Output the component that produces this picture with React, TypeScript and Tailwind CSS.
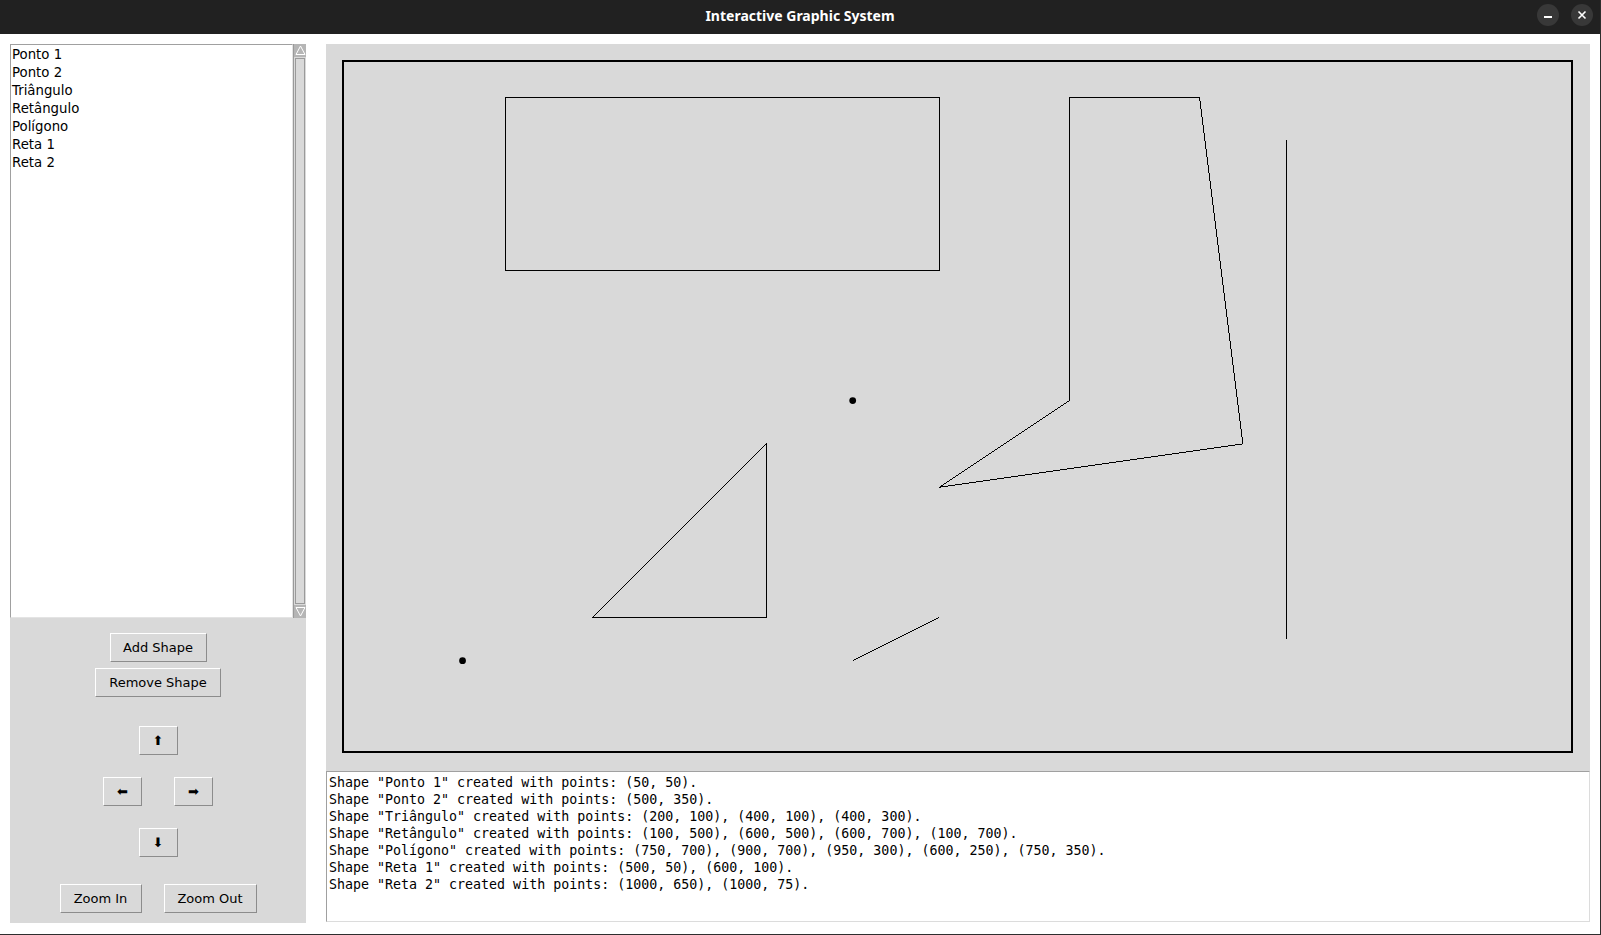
import React from 'react';

const shapeNames = ['Ponto 1', 'Ponto 2', 'Triângulo', 'Retângulo', 'Polígono', 'Reta 1', 'Reta 2'];

const logLines = [
  'Shape "Ponto 1" created with points: (50, 50).',
  'Shape "Ponto 2" created with points: (500, 350).',
  'Shape "Triângulo" created with points: (200, 100), (400, 100), (400, 300).',
  'Shape "Retângulo" created with points: (100, 500), (600, 500), (600, 700), (100, 700).',
  'Shape "Polígono" created with points: (750, 700), (900, 700), (950, 300), (600, 250), (750, 350).',
  'Shape "Reta 1" created with points: (500, 50), (600, 100).',
  'Shape "Reta 2" created with points: (1000, 650), (1000, 75).',
];

// world coords -> canvas pixels (y flipped)
const S = 0.867;

interface TkButtonProps {
  children: React.ReactNode;
  className?: string;
}

const TkButton: React.FC<TkButtonProps> = ({ children, className }) => (
  <button
    className={`flex items-center justify-center h-[29px] bg-[#d9d9d9] border border-t-white border-l-white border-r-[#8c8c8c] border-b-[#8c8c8c] text-[13px] text-black font-['DejaVu_Sans',sans-serif] ${className ?? ''}`}
  >
    {children}
  </button>
);

const ScrollArrow: React.FC<{ down?: boolean }> = ({ down }) => (
  <div className="h-[13px] w-full bg-[#b5b5b5] flex items-center justify-center">
    <svg width="11" height="11" viewBox="0 0 11 11">
      {down ? (
        <path d="M1 1.5 L10 1.5 L5.5 10 Z" fill="none" stroke="#ffffff" strokeWidth="1" />
      ) : (
        <path d="M1 9.5 L10 9.5 L5.5 1 Z" fill="none" stroke="#ffffff" strokeWidth="1" />
      )}
    </svg>
  </div>
);

const DrawingCanvas: React.FC = () => (
  <svg width="1227" height="689" className="block">
    <g transform={`translate(75.2 642) scale(${S} ${-S})`} fill="none" stroke="#000">
      {/* Ponto 1, Ponto 2 */}
      <circle cx="50" cy="50" r="3.9" fill="#000" stroke="none" />
      <circle cx="500" cy="350" r="3.9" fill="#000" stroke="none" />
      <g shapeRendering="crispEdges">
        {/* Triângulo */}
        <polygon points="200,100 400,100 400,300" vectorEffect="non-scaling-stroke" strokeWidth="1" />
        {/* Retângulo */}
        <polygon points="100,500 600,500 600,700 100,700" vectorEffect="non-scaling-stroke" strokeWidth="1" />
        {/* Polígono */}
        <polygon
          points="750,700 900,700 950,300 600,250 750,350"
          vectorEffect="non-scaling-stroke"
          strokeWidth="1"
        />
        {/* Retas */}
        <line x1="500" y1="50" x2="600" y2="100" vectorEffect="non-scaling-stroke" strokeWidth="1" />
        <line x1="1000" y1="650" x2="1000" y2="75" vectorEffect="non-scaling-stroke" strokeWidth="1" />
      </g>
    </g>
  </svg>
);

export default function App() {
  return (
    <div className="w-[1601px] h-[935px] bg-white border-r border-b border-[#2e2e2e] flex flex-col overflow-hidden">
      {/* title bar */}
      <div className="relative h-[34px] shrink-0 bg-[#212121] flex items-center justify-center pb-[3px]">
        <span className="text-white text-[14px] font-bold font-['Noto_Sans',sans-serif]">
          Interactive Graphic System
        </span>
        <div className="absolute right-[7px] top-[4px] flex gap-[12px]">
          <div className="w-[22px] h-[22px] rounded-full bg-[#383838] flex items-center justify-center">
            <div className="w-[8px] h-[1.5px] bg-white mt-[4px]" />
          </div>
          <div className="w-[22px] h-[22px] rounded-full bg-[#383838] flex items-center justify-center">
            <svg width="10" height="10" viewBox="0 0 10 10">
              <path d="M1.5 1.5 L8.5 8.5 M8.5 1.5 L1.5 8.5" stroke="#fff" strokeWidth="1.6" />
            </svg>
          </div>
        </div>
      </div>

      <div className="flex pt-[10px] pl-[10px] gap-[20px]">
        {/* left panel */}
        <div className="w-[296px] h-[879px] bg-[#d9d9d9] flex flex-col">
          <div className="flex h-[574px]">
            <div className="w-[283px] h-full bg-white border border-t-[#a0a0a0] border-l-[#a0a0a0] border-r-[#e4e4e4] border-b-[#e4e4e4] pl-[1px] pt-[1px] font-['DejaVu_Sans',sans-serif] text-[13.3px] leading-[18px] text-black">
              {shapeNames.map((n) => (
                <div key={n}>{n}</div>
              ))}
            </div>
            <div className="w-[13px] h-full bg-[#d9d9d9] border-l border-[#9a9a9a] flex flex-col">
              <ScrollArrow />
              <div className="flex-1 mx-[1px] my-[1px] border border-[#9a9a9a] bg-[#d9d9d9]" />
              <ScrollArrow down />
            </div>
          </div>

          <div className="flex flex-col items-center">
            <TkButton className="mt-[15px] w-[97px]">Add Shape</TkButton>
            <TkButton className="mt-[6px] w-[126px]">Remove Shape</TkButton>
            <TkButton className="mt-[29px] w-[39px] text-[11px]">⬆</TkButton>
            <div className="mt-[22px] flex gap-[32px]">
              <TkButton className="w-[39px] text-[11px]">⬅</TkButton>
              <TkButton className="w-[39px] text-[11px]">➡</TkButton>
            </div>
            <TkButton className="mt-[22px] w-[39px] text-[11px]">⬇</TkButton>
            <div className="mt-[27px] flex gap-[22px]">
              <TkButton className="w-[82px]">Zoom In</TkButton>
              <TkButton className="w-[93px]">Zoom Out</TkButton>
            </div>
          </div>
        </div>

        {/* right column */}
        <div className="w-[1264px] flex flex-col">
          <div className="h-[727px] bg-[#d9d9d9] pt-[16px] pl-[16px]">
            <div className="w-[1231px] h-[693px] border-2 border-black">
              <DrawingCanvas />
            </div>
          </div>
          <div className="h-[151px] bg-white border border-t-[#a0a0a0] border-l-[#a0a0a0] border-r-[#dcdcdc] border-b-[#dcdcdc] pl-[2px] pt-[2px] font-['DejaVu_Sans_Mono',monospace] text-[13.3px] leading-[17px] text-black whitespace-pre">
            {logLines.map((l) => (
              <div key={l}>{l}</div>
            ))}
          </div>
        </div>
      </div>
    </div>
  );
}
